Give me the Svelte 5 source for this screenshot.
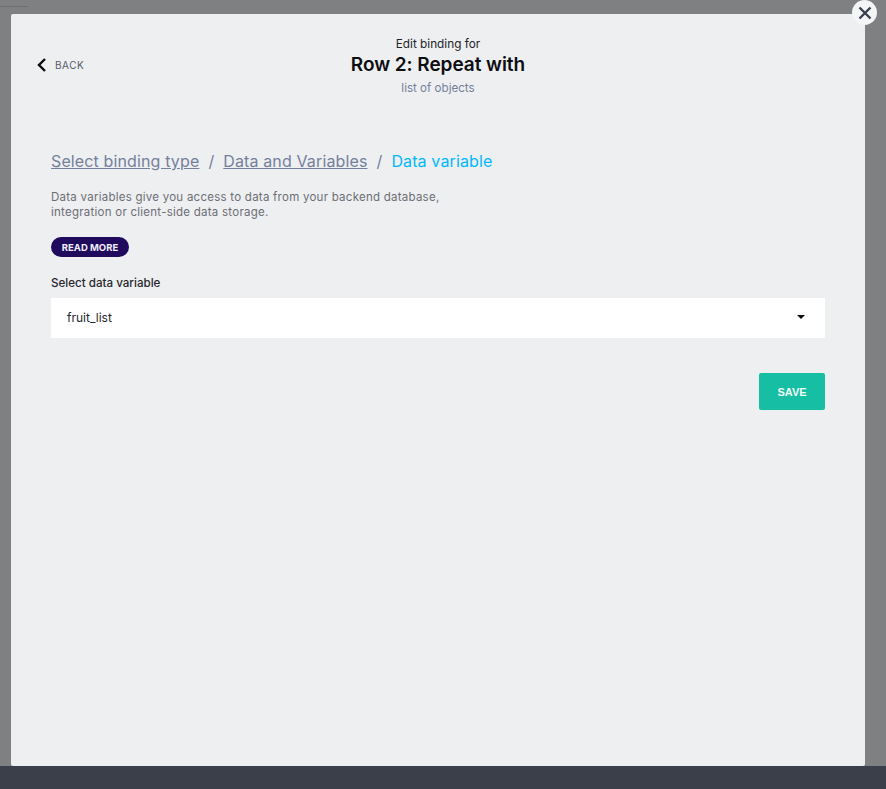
<script lang="ts">
    let variable = 'fruit_list';
</script>

<div class="page">
    <div class="overlay">
        <div class="topline"></div>
        <section class="modal">
            <button class="close" aria-label="Close">
                <svg width="14" height="14" viewBox="0 0 14 14">
                    <path d="M1.5 1.5 L12.5 12.5 M12.5 1.5 L1.5 12.5" stroke="#3a3f4f" stroke-width="2.4" fill="none" />
                </svg>
            </button>
            <header class="head">
                <a class="back" href="#back">
                    <svg width="10" height="14" viewBox="0 0 10 14">
                        <path d="M8 1 L2 7 L8 13" stroke="#0b0b0f" stroke-width="2.4" fill="none" />
                    </svg>
                    <span>BACK</span>
                </a>
                <div class="titles">
                    <div class="kicker">Edit binding for</div>
                    <h1>Row 2: Repeat with</h1>
                    <div class="sub">list of objects</div>
                </div>
            </header>
            <div class="body">
                <nav class="crumbs">
                    <a href="#type">Select binding type</a>
                    <span class="sep">/</span>
                    <a href="#data">Data and Variables</a>
                    <span class="sep">/</span>
                    <span class="current">Data variable</span>
                </nav>
                <p class="desc">Data variables give you access to data from your backend database,<br />integration or client-side data storage.</p>
                <button class="more">READ MORE</button>
                <div class="label">Select data variable</div>
                <div class="select">
                    <span>{variable}</span>
                    <i class="caret"></i>
                </div>
                <div class="actions">
                    <button class="save">SAVE</button>
                </div>
            </div>
        </section>
    </div>
    <div class="footer"></div>
</div>

<style>
    :global(body) {
        margin: 0;
        overflow: hidden;
        font-family: Inter, "Open Sans", sans-serif;
    }

    .page {
        width: 886px;
        height: 789px;
        display: flex;
        flex-direction: column;
        background: #3a3f4a;
    }

    .overlay {
        position: relative;
        height: 766px;
        padding: 14px 21px 0 11px;
        box-sizing: border-box;
        background: #7f8082;
    }

    .topline {
        position: absolute;
        left: 0;
        top: 6px;
        width: 28px;
        height: 1px;
        background: #6d6f72;
    }

    .modal {
        position: relative;
        height: 752px;
        background: #eeeff1;
        border-radius: 2px;
    }

    .close {
        position: absolute;
        top: -14px;
        right: -12px;
        width: 25px;
        height: 25px;
        padding: 0;
        border: 0;
        border-radius: 50%;
        background: #f4f5f6;
        display: flex;
        align-items: center;
        justify-content: center;
    }

    .head {
        position: relative;
        padding-top: 22px;
    }

    .back {
        position: absolute;
        left: 26px;
        top: 44px;
        display: flex;
        align-items: center;
        gap: 8px;
        font-size: 10px;
        letter-spacing: 0.55px;
        color: #555a68;
        text-decoration: none;
    }

    .titles {
        text-align: center;
    }

    .kicker {
        font-size: 11.8px;
        line-height: 16px;
        color: #22242a;
    }

    h1 {
        margin: 0;
        font-size: 19px;
        line-height: 26px;
        font-weight: 600;
        letter-spacing: -0.05px;
        color: #0d0e12;
    }

    .sub {
        margin-top: 2px;
        font-size: 11.6px;
        line-height: 16px;
        color: #74809b;
    }

    .body {
        padding: 53px 40px 0;
    }

    .crumbs {
        display: flex;
        gap: 9px;
        font-size: 16px;
        line-height: 24px;
        letter-spacing: 0.13px;
        color: #74809b;
    }

    .crumbs a {
        color: #74809b;
    }

    .current {
        color: #00b8ff;
    }

    .desc {
        margin: 17px 0 0;
        font-size: 11.5px;
        line-height: 15px;
        letter-spacing: 0.25px;
        color: #6c6e75;
    }

    .more {
        display: block;
        margin-top: 17px;
        width: 78px;
        height: 20px;
        padding: 0;
        border: 0;
        border-radius: 10px;
        background: #1f0a5e;
        color: #f0eefa;
        font: 700 9.5px Inter, sans-serif;
    }

    .label {
        margin-top: 18px;
        font-size: 11.6px;
        line-height: 16px;
        font-weight: 500;
        color: #26272c;
    }

    .select {
        margin-top: 7px;
        height: 40px;
        padding: 0 20px 2px 16px;
        box-sizing: border-box;
        display: flex;
        align-items: center;
        justify-content: space-between;
        background: #fff;
        font-size: 12px;
        color: #26272c;
    }

    .caret {
        width: 0;
        height: 0;
        border-left: 4px solid transparent;
        border-right: 4px solid transparent;
        border-top: 4px solid #0b0b0f;
    }

    .actions {
        display: flex;
        justify-content: flex-end;
        margin-top: 35px;
    }

    .save {
        width: 66px;
        height: 37px;
        padding: 0;
        border: 0;
        border-radius: 2px;
        background: #16bfa3;
        color: #f2fbf9;
        font: 700 11px "Liberation Sans", Arial, sans-serif;
    }
</style>
